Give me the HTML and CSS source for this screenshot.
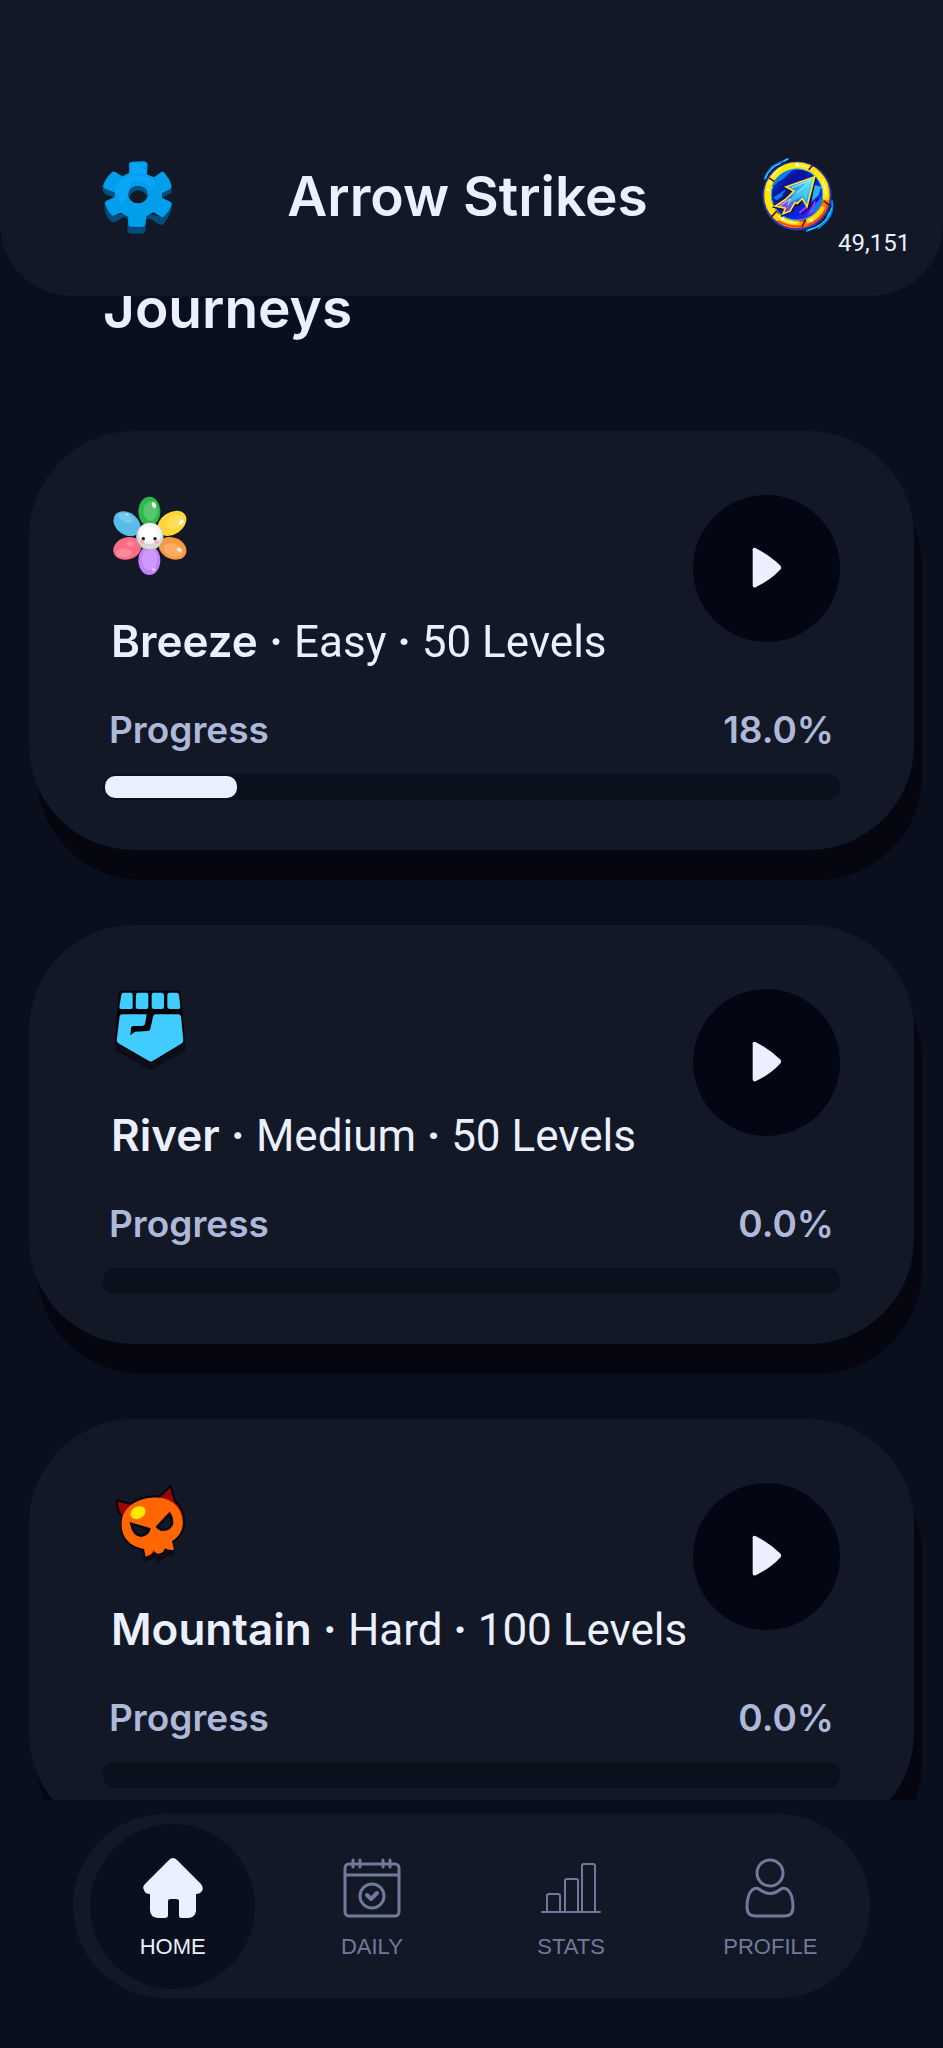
FILE: index.html
```html
<!DOCTYPE html>
<html lang="en">
<head>
<meta charset="utf-8">
<meta name="viewport" content="width=device-width, initial-scale=1">
<title>Arrow Strikes</title>
<link rel="stylesheet" href="styles.css">
</head>

<body>

<!-- shared icons -->
<svg class="defs" aria-hidden="true">
	<symbol id="play" viewBox="320 256 102 140">
		<path d="M328 270Q330 263 338 266Q382 288 410 316Q418 324 411 332Q382 364 337 390Q329 392 328 384Z" fill="#000"/>
		<path d="M328 268Q330 261 338 265Q382 288 411 317Q416 323 411 329Q382 361 337 382Q329 385 328 377Z" fill="#eaf0ff"/>
	</symbol>
</svg>

<header class="top">
	<button class="settings" type="button" aria-label="Settings">
		<svg viewBox="63 60 219 225">
			<defs>
				<path id="gear" d="M147 71Q148 65 158 65L188 64Q202 65 203 73L201 103L222 112L244 96Q249 93 254 99Q268 115 274 134Q276 143 270 147L246 160L247 174L271 185Q277 189 275 196Q268 214 253 229Q247 234 241 229L220 217L199 229L196 254Q195 260 186 261L156 260Q145 260 145 252L144 230L122 218L104 226Q98 229 92 223Q80 208 75 191Q74 185 79 182L104 171V157L75 146Q68 143 70 135Q77 114 94 98Q100 92 106 96L127 109L148 98ZM174 138A29 26 0 1 0 174 190A29 26 0 1 0 174 138Z" fill-rule="evenodd"/>
			</defs>
			<g fill="#004c7b">
				<path d="M67 134L105 150V173L80 165Q67 158 67 144ZM247 155L275 138V158L248 173ZM73 185L98 224L145 222V250Q144 228 129 232L109 245Q98 251 88 240Q74 224 74 204ZM275 190V208Q268 232 253 250Q246 258 235 252L216 239Q202 233 197 240V222L246 229ZM143 245H197V270Q196 280 187 281H153Q142 280 142 270Z"/>
				<path d="M145 158Q174 124 203 158V168Q174 134 146 168Z"/>
			</g>
			<use href="#gear" fill="#009eeb"/>
			<path d="M146 157Q152 138 174 138Q198 138 202 157V172Q193 151 174 151Q156 151 147 173Z" fill="#005384"/>
			<path d="M152 71Q155 67 164 68L198 91V101L148 100ZM107 137Q129 103 162 106Q202 102 226 125L216 146Q186 113 151 128L143 168L129 194Q104 169 107 137Z" fill="#12aeff" opacity=".5"/>
		</svg>
	</button>
	<h1>Arrow Strikes</h1>
	<div class="coins">
		<svg viewBox="355 80 222 230" role="img" aria-label="Coins">
			<defs>
				<linearGradient id="ring" x1="0" y1="0" x2="1" y2="1">
					<stop offset="0" stop-color="#fff200"/>
					<stop offset=".65" stop-color="#ffd400"/>
					<stop offset="1" stop-color="#e31c16"/>
				</linearGradient>
				<linearGradient id="core" x1="0" y1="0" x2="1" y2="1">
					<stop offset="0" stop-color="#0077e8"/>
					<stop offset=".3" stop-color="#0710a0"/>
					<stop offset=".7" stop-color="#0926dd"/>
					<stop offset="1" stop-color="#b50af0"/>
				</linearGradient>
				<linearGradient id="dart" x1="1" y1="0" x2="0" y2="1">
					<stop offset="0" stop-color="#5df8f0"/>
					<stop offset=".5" stop-color="#218dec"/>
					<stop offset="1" stop-color="#b510ed"/>
				</linearGradient>
			</defs>
			<g fill="none" stroke-linecap="round">
				<path d="M366 148Q378 112 411 100M388 112L434 89M568 215Q575 260 536 287L492 304M558 250Q559 270 528 295" stroke="#0786ff" stroke-width="6"/>
				<path d="M369 145Q382 114 413 102M424 95L436 88M566 237Q557 273 522 292M496 302L518 295" stroke="#43eaff" stroke-width="3"/>
			</g>
			<circle cx="463" cy="199" r="104" fill="#083eeb"/>
			<circle cx="463" cy="198" r="100" fill="#c01c0e"/>
			<circle cx="463" cy="197" r="89" fill="none" stroke="url(#ring)" stroke-width="19"/>
			<path d="M381 170A86 86 0 0 0 394 249M399 137A86 86 0 0 1 500 118M514 127A86 86 0 0 1 549 211" fill="none" stroke="#ffe900" stroke-width="18"/>
			<path d="M400 256Q431 282 470 280M492 276Q524 264 544 232" fill="none" stroke="#ffd800" stroke-width="15"/>
			<path d="M380 165Q387 132 414 118M464 108Q491 108 509 121M538 151Q550 176 550 194M405 259Q431 279 461 281" fill="none" stroke="#fff58a" stroke-width="5"/>
			<path d="M405 274Q437 293 476 291M496 287Q539 269 554 229" fill="none" stroke="#ff431b" stroke-width="6"/>
			<path d="M498 121L512 105M379 145L397 157M386 262L402 245M478 293L489 269M543 214L560 227" stroke="#68100b" stroke-width="5"/>
			<circle cx="463" cy="195" r="77" fill="url(#core)" stroke="#18c6ff" stroke-width="3"/>
			<path d="M388 172Q402 128 450 121L419 151ZM391 205L429 179L414 218ZM493 258L536 199Q536 233 514 248Z" fill="#087df1"/>
			<path d="M404 162L480 128M420 197L491 145M400 218L456 179M477 254L529 207" stroke="#181285" stroke-width="6"/>
			<path d="M512 165L535 172L529 196L508 215Z" fill="#28aef5"/>
			<path d="M500 252L518 216M470 250L493 231" stroke="#c52bff" stroke-width="5"/>
			<path d="M522 143L499 241L480 214L469 230L457 231L450 246L414 263L422 242L388 234L423 204L444 190L422 172Z" fill="#171038"/>
			<path d="M516 142L493 231L479 207L464 222L457 219L442 245L421 253L428 236L398 230L428 210L454 185L430 172Z" fill="url(#dart)" stroke="#ffe12c" stroke-width="5" stroke-linejoin="miter"/>
			<path d="M507 152L456 188L437 222L481 199L489 215Z" fill="#56e9fa" opacity=".5"/>
			<path d="M447 175L506 151L464 190M412 229L444 208L435 228" fill="none" stroke="#c9dfff" stroke-width="3"/>
			<g fill="#fff"><circle cx="463" cy="106" r="5"/><circle cx="506" cy="272" r="5"/><circle cx="376" cy="181" r="4"/><circle cx="420" cy="269" r="4"/></g>
		</svg>
		<span class="balance">49,151</span>
	</div>
</header>

<main class="content">
	<h2>Journeys</h2>

	<section class="card">
		<div class="info">
			<svg class="badge" viewBox="65 72 234 246" aria-hidden="true">
				<ellipse cx="113" cy="158" rx="44" ry="33" transform="rotate(37 113 158)" fill="#58bce8"/>
				<ellipse cx="114" cy="232" rx="43" ry="33" transform="rotate(-19 114 232)" fill="#ff6d84"/>
				<ellipse cx="180" cy="268" rx="33" ry="44" fill="#c080ff"/>
				<ellipse cx="250" cy="232" rx="43" ry="32" transform="rotate(24 250 232)" fill="#fb993e"/>
				<ellipse cx="248" cy="157" rx="47" ry="33" transform="rotate(-34 248 157)" fill="#ffd635"/>
				<ellipse cx="180" cy="121" rx="33" ry="44" fill="#2db84b"/>
				<g fill="#fff" opacity=".2">
					<ellipse cx="183" cy="120" rx="21" ry="29"/>
					<ellipse cx="110" cy="141" rx="24" ry="13" transform="rotate(25 110 141)"/>
					<ellipse cx="257" cy="153" rx="29" ry="18" transform="rotate(-28 257 153)"/>
					<ellipse cx="252" cy="237" rx="30" ry="20" transform="rotate(18 252 237)"/>
					<ellipse cx="104" cy="246" rx="24" ry="13"/>
					<ellipse cx="123" cy="218" rx="11" ry="7"/>
					<ellipse cx="181" cy="264" rx="24" ry="34"/>
				</g>
				<g fill="#fff">
					<ellipse cx="194" cy="102" rx="6" ry="9" transform="rotate(-20 194 102)"/>
					<ellipse cx="276" cy="154" rx="8" ry="6" transform="rotate(-40 276 154)"/>
					<ellipse cx="270" cy="237" rx="8" ry="5" transform="rotate(20 270 237)" opacity=".8"/>
					<ellipse cx="113" cy="130" rx="5" ry="2"/>
					<circle cx="193" cy="296" r="4" opacity=".7"/>
				</g>
				<circle cx="181" cy="197" r="41" fill="#a89aa8"/>
				<circle cx="182" cy="195" r="40" fill="#d8d8d8"/>
				<ellipse cx="182" cy="188" rx="34" ry="31" fill="#f6f6f6"/>
				<ellipse cx="180" cy="189" rx="23" ry="22" fill="#fff"/>
				<circle cx="162" cy="203" r="5" fill="#161616"/>
				<circle cx="197" cy="203" r="5" fill="#161616"/>
				<ellipse cx="159" cy="213" rx="7" ry="5" fill="#ffaaa4"/>
				<ellipse cx="202" cy="213" rx="7" ry="5" fill="#ffaaa4"/>
			</svg>
			<h3>Breeze · <span>Easy <b>·</b> 50 Levels</span></h3>
		</div>
		<button class="play" type="button" aria-label="Play Breeze"><svg><use href="#play"/></svg></button>
		<div class="progress">
			<label for="breeze">Progress</label>
			<output>18.0%</output>
			<progress id="breeze" max="100" value="18"></progress>
		</div>
	</section>

	<section class="card">
		<div class="info">
			<svg class="badge" viewBox="65 83 234 246" aria-hidden="true">
				<path d="M80 238L184 298L288 238V268L184 328L76 266Z" fill="#0b0e19"/>
				<path d="M88 98Q90 88 100 88H264Q273 88 274 98L279 143L286 238Q287 246 280 250L191 303Q184 307 177 303L83 249Q76 246 77 238L84 145Z" fill="#020308"/>
				<g fill="#40ccff">
					<path d="M96 100Q97 94 104 94H126Q130 95 130 101V139Q130 143 125 143H95Q90 143 90 137ZM140 101Q140 94 147 94H171Q177 94 177 101V136Q177 143 171 143H146Q139 143 139 137ZM187 101Q187 94 194 94H217Q224 95 224 101V137Q224 143 218 143H193Q186 142 187 136ZM234 101Q234 94 240 94H261Q268 94 269 101L273 137Q273 143 268 143H241Q234 142 234 137Z"/>
					<path d="M91 165Q92 159 99 159H172L167 189Q165 193 159 194H132Q126 194 125 200L123 222L137 211L176 209Q181 209 183 203L191 166Q193 159 199 159H268Q274 160 275 166L282 237Q282 242 278 246L191 298Q185 303 179 299L87 246Q82 242 82 237Z"/>
				</g>
			</svg>
			<h3>River · <span>Medium <b>·</b> 50 Levels</span></h3>
		</div>
		<button class="play" type="button" aria-label="Play River"><svg><use href="#play"/></svg></button>
		<div class="progress">
			<label for="river">Progress</label>
			<output>0.0%</output>
			<progress id="river" max="100" value="0"></progress>
		</div>
	</section>

	<section class="card">
		<div class="info">
			<svg class="badge" viewBox="65 64 234 246" aria-hidden="true">
				<path d="M101 226Q118 257 162 270L164 302L193 292L209 300L229 287L255 283L258 249Z" fill="#0b0e19"/>
				<path d="M82 116L124 127Q165 99 210 105L244 73L257 118Q293 151 281 199Q273 227 248 241L252 264L226 263Q216 279 198 273L187 282L170 286L163 262Q111 254 98 210L97 163Q83 147 82 116Z" fill="#990702" stroke="#050509" stroke-width="6" stroke-linejoin="round"/>
				<path d="M189 108C248 102 285 144 280 191Q277 221 248 239L254 264Q240 268 226 260Q224 275 208 276Q197 276 193 265Q187 280 169 285L164 262C119 256 94 223 97 185C97 140 139 111 189 108Z" fill="#ff6500"/>
				<path d="M121 181L184 200Q182 221 156 226Q128 225 121 181ZM199 195L241 150Q255 169 251 190Q239 212 214 207Q204 204 199 195Z" fill="#060a11"/>
				<path d="M132 191L173 204Q164 219 149 217Q136 211 132 191ZM210 195L239 164Q248 184 239 197Q225 207 210 195Z" fill="#121826"/>
				<ellipse cx="146" cy="153" rx="24" ry="18" transform="rotate(-27 146 153)" fill="#ffe800"/>
			</svg>
			<h3>Mountain · <span>Hard <b>·</b> 100 Levels</span></h3>
		</div>
		<button class="play" type="button" aria-label="Play Mountain"><svg><use href="#play"/></svg></button>
		<div class="progress">
			<label for="mountain">Progress</label>
			<output>0.0%</output>
			<progress id="mountain" max="100" value="0"></progress>
		</div>
	</section>
</main>

<footer class="bottom">
	<nav>
		<a class="active" href="#home" aria-current="page">
			<svg viewBox="0 0 60 60"><path d="M26 2Q30-2 34 2L58 26Q61 30 59 33Q57 36 53 36V53Q52 60 45 60H38Q36 60 36 57V43Q36 41 33 41H28Q25 41 25 43V57Q25 60 22 60H15Q7 59 7 52V36Q2 36 1 32Q-1 29 2 26Z" fill="currentColor"/></svg>
			HOME
		</a>
		<a href="#daily">
			<svg viewBox="0 0 60 60" fill="none" stroke="currentColor" stroke-width="3" stroke-linecap="round" stroke-linejoin="round">
				<rect x="3" y="6" width="54" height="52" rx="4"/>
				<path d="M3 17H57M11 2V9M18 2V9M41 2V9M48 2V9"/>
				<circle cx="30" cy="38" r="12"/>
				<path d="M25 37L29 41L35 35" stroke-width="4"/>
			</svg>
			DAILY
		</a>
		<a href="#stats">
			<svg viewBox="0 0 60 60" fill="none" stroke="currentColor" stroke-width="2" stroke-linecap="round" stroke-linejoin="round">
				<path d="M1 54H59M6 54V38Q6 36 8 36H17Q19 36 19 38V54M24 54V23Q24 21 26 21H35Q37 21 37 23V54M41 54V8Q41 6 43 6H52Q54 6 54 8V54"/>
			</svg>
			STATS
		</a>
		<a href="#profile">
			<svg viewBox="0 0 60 60" fill="none" stroke="currentColor" stroke-width="3" stroke-linecap="round" stroke-linejoin="round">
				<circle cx="30" cy="15" r="13"/>
				<path d="M19 31Q16 29 12 32Q7 37 7 49Q7 58 15 58H45Q53 58 53 49Q53 37 48 32Q44 29 41 31Q30 40 19 31Z"/>
			</svg>
			PROFILE
		</a>
	</nav>
</footer>

</body>
</html>
```

FILE: styles.css
```css
* {
	box-sizing: border-box;
}

body {
	display: grid;
	grid-template-rows: auto 1fr auto;
	height: 100vh;
	margin: 0;
	background: #0a0f1d;
	color: #eaf0ff;
	font-family: Inter, Roboto, sans-serif;
}

h1, h2, h3 {
	margin: 0;
	font-weight: 600;
}

button {
	padding: 0;
	border: 0;
	background: none;
	cursor: pointer;
}

svg {
	display: block;
}

.defs {
	position: absolute;
	width: 0;
	height: 0;
}

/* header */

.top {
	display: flex;
	justify-content: space-between;
	align-items: flex-start;
	z-index: 1;
	padding: 156px 108px 60px 101px;
	border-radius: 0 0 72px 72px;
	background: #121826;
}

.settings {
	margin-top: 4px;
}

.settings svg {
	width: 73px;
	height: 75px;
}

h1, h2 {
	font-size: 55px;
	line-height: 80px;
}

.coins {
	position: relative;
}

.coins svg {
	width: 74px;
	height: 77px;
}

/* hangs off the coin's lower right corner */
.balance {
	position: absolute;
	top: 72px;
	left: 77px;
	font-family: Roboto, sans-serif;
	font-size: 24px;
	line-height: 30px;
}

/* journeys */

.content {
	display: flex;
	flex-direction: column;
	gap: 75px;
	min-height: 0;
	margin-top: -28px;
	padding: 0 29px;
	overflow: hidden;
}

h2 {
	padding: 0 74px;
	margin-bottom: 8px;
}

.card {
	display: grid;
	grid-template-columns: 1fr auto;
	flex: none;
	padding: 64px 74px 50px;
	border-radius: 105px;
	background: #121826;
	box-shadow: 8px 30px #050610;
}

.info {
	padding-left: 8px;
}

.badge {
	width: 78px;
	height: 82px;
}

h3 {
	margin-top: 36px;
	font-size: 44px;
	line-height: 56px;
	white-space: nowrap;
}

h3 span {
	font-family: Roboto, sans-serif;
	font-weight: 400;
}

h3 b {
	font-weight: 700;
}

.play {
	display: grid;
	place-items: center;
	width: 147px;
	height: 147px;
	border-radius: 50%;
	background: #030613;
}

.play svg {
	width: 34px;
	height: 47px;
}

.progress {
	display: grid;
	grid-template-columns: 1fr auto;
	grid-column: 1 / -1;
	row-gap: 24px;
	margin-top: 40px;
	color: #aeb8d8;
	font-size: 37px;
	font-weight: 600;
	line-height: 40px;
}

.progress label {
	padding-left: 6px;
}

.progress output {
	padding-right: 6px;
}

progress {
	appearance: none;
	grid-column: 1 / -1;
	width: 100%;
	height: 26px;
	border: 0;
}

progress::-webkit-progress-bar {
	padding: 2px;
	border-radius: 12px;
	background: #0a101c;
}

progress::-webkit-progress-value {
	border-radius: 10px;
	background: #eaf0ff;
}

/* bottom bar */

.bottom {
	z-index: 1;
	padding: 14px 73px 50px;
	background: #0a0f1d;
}

nav {
	display: grid;
	grid-template-columns: repeat(4, 1fr);
	align-items: center;
	justify-items: center;
	height: 184px;
	border-radius: 92px;
	background: #121826;
}

nav a {
	display: flex;
	flex-direction: column;
	align-items: center;
	gap: 15px;
	width: 165px;
	height: 165px;
	padding-top: 34px;
	border-radius: 50%;
	color: #707b9c;
	font-family: "Liberation Sans", sans-serif;
	font-size: 22px;
	line-height: 28px;
	text-decoration: none;
}

nav svg {
	width: 60px;
	height: 60px;
}

nav .active {
	background: #0a0f1d;
	color: #eaf0ff;
}
```
